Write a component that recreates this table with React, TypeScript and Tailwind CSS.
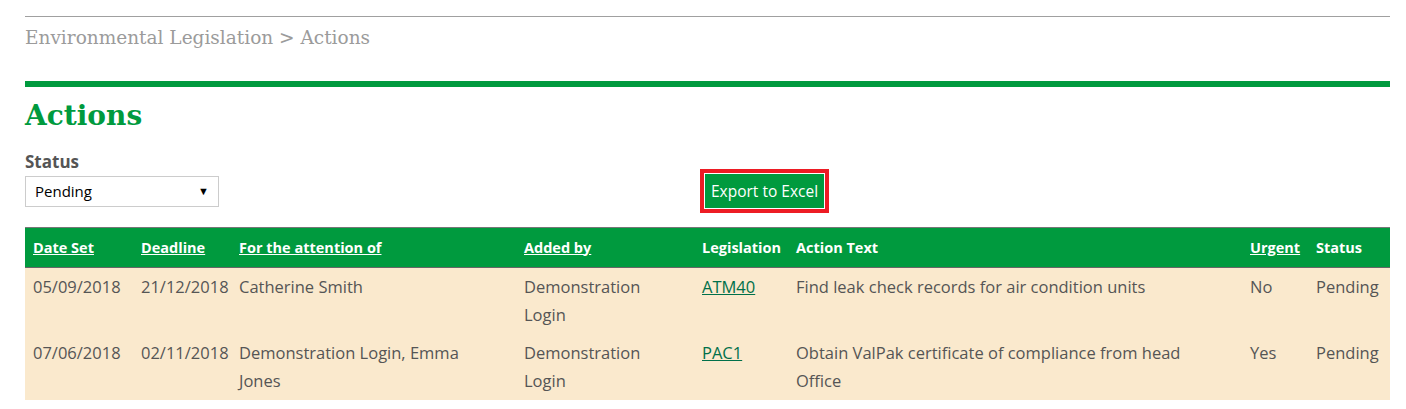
import React from "react";

const sans = { fontFamily: '"Open Sans", "Liberation Sans", sans-serif' };

export default function App() {
  const rows = [
    {
      set: "05/09/2018",
      deadline: "21/12/2018",
      attn: "Catherine Smith",
      added: "Demonstration Login",
      leg: "ATM40",
      text: "Find leak check records for air condition units",
      urgent: "No",
      status: "Pending",
    },
    {
      set: "07/06/2018",
      deadline: "02/11/2018",
      attn: "Demonstration Login, Emma Jones",
      added: "Demonstration Login",
      leg: "PAC1",
      text: "Obtain ValPak certificate of compliance from head Office",
      urgent: "Yes",
      status: "Pending",
    },
  ];
  const td = "pl-[8px] pr-[4px] pt-[5px] pb-[5px]";
  return (
    <div className="bg-white w-[1406px] h-[409px] overflow-hidden" style={sans}>
      <div className="mx-[25px] w-[1365px] pt-[16px]">
        <div className="border-t border-[#a0a0a0]" />
        <div
          className="mt-[10px] text-[18.5px] leading-[22px] text-[#9b9b9b]"
          style={{ fontFamily: '"DejaVu Serif", serif' }}
        >
          Environmental Legislation &gt; Actions
        </div>
        <div className="mt-[32px] h-[6px] bg-[#009a3e]" />
        <h1
          className="mt-[11px] text-[28px] leading-[36px] font-bold text-[#009a3e]"
          style={{ fontFamily: '"DejaVu Serif", serif' }}
        >
          Actions
        </h1>
        <div className="mt-[18px] relative h-[62px]">
          <div className="text-[17px] leading-[20px] font-bold text-[#555]">Status</div>
          <div className="mt-[4px] w-[194px] h-[31px] border border-[#ccc] flex items-center justify-between pl-[9px] pr-[9px] text-[15px] text-black">
            <span>Pending</span>
            <span className="text-[11px]">▼</span>
          </div>
          <div className="absolute left-[675px] top-[17px] border-[4px] border-[#ed1c24]">
            <div className="border border-white bg-[#009a3e] text-white text-[15.5px] leading-[22px] px-[6px] py-[6px]">
              Export to Excel
            </div>
          </div>
        </div>
        <table className="mt-[13px] w-full border-collapse table-fixed">
          <colgroup>
            <col className="w-[108px]" />
            <col className="w-[98px]" />
            <col className="w-[285px]" />
            <col className="w-[178px]" />
            <col className="w-[94px]" />
            <col className="w-[454px]" />
            <col className="w-[66px]" />
            <col className="w-[82px]" />
          </colgroup>
          <thead>
            <tr className="bg-[#009a3e] text-white text-[14.5px] font-bold h-[40px] border-t border-t-[#777] border-b border-b-[#666]">
              <th className="text-left pl-[8px] underline">Date Set</th>
              <th className="text-left pl-[8px] underline">Deadline</th>
              <th className="text-left pl-[8px] underline">For the attention of</th>
              <th className="text-left pl-[8px] underline">Added by</th>
              <th className="text-left pl-[8px]">Legislation</th>
              <th className="text-left pl-[8px]">Action Text</th>
              <th className="text-left pl-[8px] underline">Urgent</th>
              <th className="text-left pl-[8px]">Status</th>
            </tr>
          </thead>
          <tbody>
            {rows.map((r, i) => (
              <tr key={i} className="bg-[#fae9cd] text-[#555] text-[16.5px] leading-[28px] align-top">
                <td className={td + " whitespace-nowrap"}>{r.set}</td>
                <td className={td + " whitespace-nowrap"}>{r.deadline}</td>
                <td className="pl-[8px] pr-[20px] pt-[5px] pb-[5px]">{r.attn}</td>
                <td className="pl-[8px] pr-[20px] pt-[5px] pb-[5px]">{r.added}</td>
                <td className={td}>
                  <span className="underline text-[#00704a]">{r.leg}</span>
                </td>
                <td className="pl-[8px] pr-[30px] pt-[5px] pb-[5px]">{r.text}</td>
                <td className={td}>{r.urgent}</td>
                <td className={td + " whitespace-nowrap"}>{r.status}</td>
              </tr>
            ))}
          </tbody>
        </table>
      </div>
    </div>
  );
}
